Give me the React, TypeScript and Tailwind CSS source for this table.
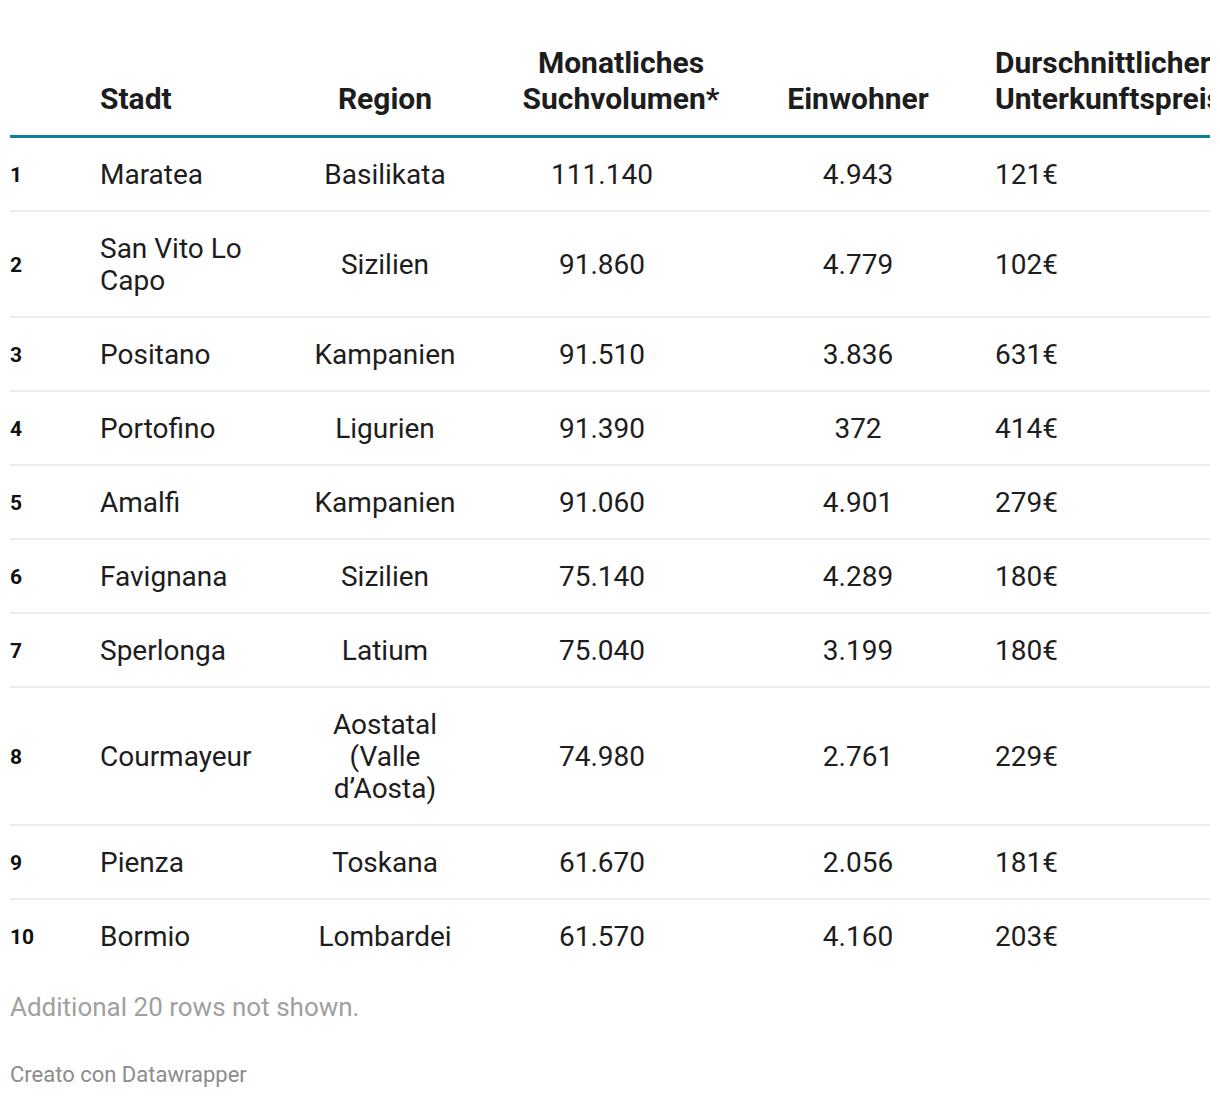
import React from "react";

const rows = [
  { rank: 1, city: "Maratea", region: "Basilikata", search: "111.140", people: "4.943", price: "121€" },
  { rank: 2, city: "San Vito Lo Capo", region: "Sizilien", search: "91.860", people: "4.779", price: "102€" },
  { rank: 3, city: "Positano", region: "Kampanien", search: "91.510", people: "3.836", price: "631€" },
  { rank: 4, city: "Portofino", region: "Ligurien", search: "91.390", people: "372", price: "414€" },
  { rank: 5, city: "Amalfi", region: "Kampanien", search: "91.060", people: "4.901", price: "279€" },
  { rank: 6, city: "Favignana", region: "Sizilien", search: "75.140", people: "4.289", price: "180€" },
  { rank: 7, city: "Sperlonga", region: "Latium", search: "75.040", people: "3.199", price: "180€" },
  { rank: 8, city: "Courmayeur", region: "Aostatal (Valle d’Aosta)", search: "74.980", people: "2.761", price: "229€" },
  { rank: 9, city: "Pienza", region: "Toskana", search: "61.670", people: "2.056", price: "181€" },
  { rank: 10, city: "Bormio", region: "Lombardei", search: "61.570", people: "4.160", price: "203€" },
];

const cols = "grid grid-cols-[80px_200px_190px_244px_268px_300px]";

const App: React.FC = () => {
  return (
    <div className="min-h-[1098px] bg-white px-[10px] pt-[45px] font-['Roboto',sans-serif] text-[#1d1d1d]">
      <div className="w-[1200px] overflow-hidden">
        {/* header */}
        <div className={`${cols} items-end border-b-[3px] border-[#0e7f9a] pb-[18px] text-[30px] font-bold leading-[36px]`}>
          <div></div>
          <div className="pl-[10px]">Stadt</div>
          <div className="text-center">Region</div>
          <div className="pl-[38px] text-center">
            Monatliches
            <br />
            Suchvolumen*
          </div>
          <div className="text-center">Einwohner</div>
          <div className="whitespace-nowrap pl-[3px]">
            Durschnittlicher
            <br />
            Unterkunftspreis
          </div>
        </div>

        {/* body */}
        {rows.map((r, i) => (
          <div
            key={r.rank}
            className={`${cols} items-center pt-[21px] pb-[19px] text-[28px] leading-[32px] ${
              i < rows.length - 1 ? "border-b-2 border-[#ececec]" : ""
            }`}
          >
            <div className="text-[21px] font-bold text-[#111]">{r.rank}</div>
            <div className="pl-[10px] pr-[10px]">{r.city}</div>
            <div className="px-[20px] text-center">{r.region}</div>
            <div className="text-center">{r.search}</div>
            <div className="text-center">{r.people}</div>
            <div className="pl-[3px]">{r.price}</div>
          </div>
        ))}
      </div>

      <div className="mt-[20px] text-[26px] leading-[30px] text-[#a0a0a0]">
        Additional 20 rows not shown.
      </div>
      <div className="mt-[40px] text-[22px] leading-[26px] text-[#8c8c8c]">
        Creato con Datawrapper
      </div>
    </div>
  );
};

export default App;
